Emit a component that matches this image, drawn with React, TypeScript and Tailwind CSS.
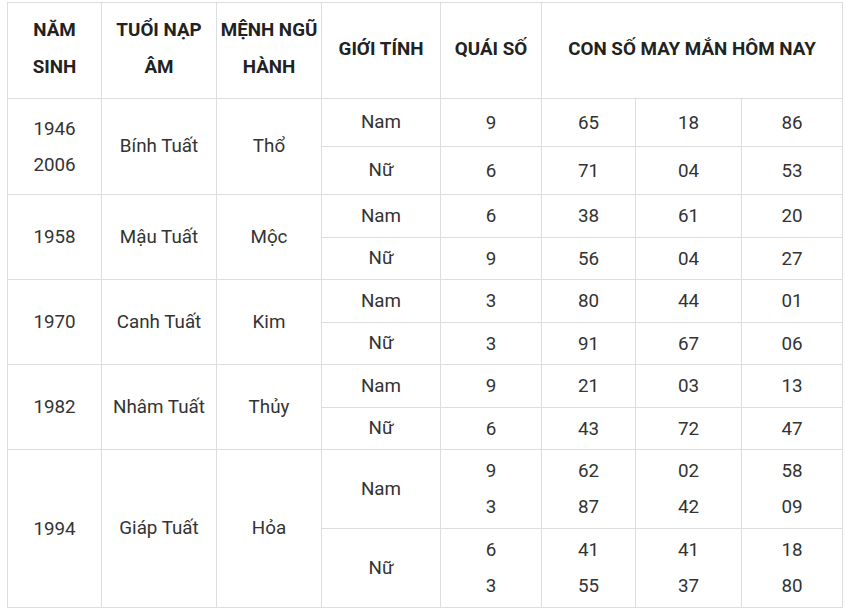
const rows = [
  {
    years: ["1946", "2006"],
    tuoi: "Bính Tuất",
    menh: "Thổ",
    h: ["h-[48px]", "h-[48px]"],
    subs: [
      { g: "Nam", q: ["9"], n: [["65"], ["18"], ["86"]] },
      { g: "Nữ", q: ["6"], n: [["71"], ["04"], ["53"]] },
    ],
  },
  {
    years: ["1958"],
    tuoi: "Mậu Tuất",
    menh: "Mộc",
    h: ["h-[43px]", "h-[42px]"],
    subs: [
      { g: "Nam", q: ["6"], n: [["38"], ["61"], ["20"]] },
      { g: "Nữ", q: ["9"], n: [["56"], ["04"], ["27"]] },
    ],
  },
  {
    years: ["1970"],
    tuoi: "Canh Tuất",
    menh: "Kim",
    h: ["h-[43px]", "h-[42px]"],
    subs: [
      { g: "Nam", q: ["3"], n: [["80"], ["44"], ["01"]] },
      { g: "Nữ", q: ["3"], n: [["91"], ["67"], ["06"]] },
    ],
  },
  {
    years: ["1982"],
    tuoi: "Nhâm Tuất",
    menh: "Thủy",
    h: ["h-[43px]", "h-[42px]"],
    subs: [
      { g: "Nam", q: ["9"], n: [["21"], ["03"], ["13"]] },
      { g: "Nữ", q: ["6"], n: [["43"], ["72"], ["47"]] },
    ],
  },
  {
    years: ["1994"],
    tuoi: "Giáp Tuất",
    menh: "Hỏa",
    h: ["h-[79px]", "h-[79px]"],
    subs: [
      { g: "Nam", q: ["9", "3"], n: [["62", "87"], ["02", "42"], ["58", "09"]] },
      { g: "Nữ", q: ["6", "3"], n: [["41", "55"], ["41", "37"], ["18", "80"]] },
    ],
  },
];

const cell = "border border-[#dddddd] p-0 text-center align-middle";

const Lines = ({ items }: { items: string[] }) => (
  <>
    {items.map((t, i) => (
      <div key={i} className="leading-[36px]">
        {t}
      </div>
    ))}
  </>
);

export default function App() {
  return (
    <div className="min-h-[613px] w-[846px] bg-white pl-[7px] pt-[2px]" style={{ fontFamily: "Roboto, 'Liberation Sans', sans-serif" }}>
      <table className="table-fixed border-collapse text-[18.8px] text-[#333333] w-[836px]">
        <colgroup>
          <col className="w-[94px]" />
          <col className="w-[115px]" />
          <col className="w-[105px]" />
          <col className="w-[119px]" />
          <col className="w-[101px]" />
          <col className="w-[94px]" />
          <col className="w-[106px]" />
          <col className="w-[101px]" />
        </colgroup>
        <thead>
          <tr className="h-[96px] font-bold text-[#222222] leading-[37px]">
            <th className={cell}><div className="-mt-[3px]">NĂM<br />SINH</div></th>
            <th className={cell}><div className="-mt-[3px]">TUỔI NẠP<br />ÂM</div></th>
            <th className={cell + " whitespace-nowrap"}><div className="-mt-[3px]">MỆNH NGŨ<br />HÀNH</div></th>
            <th className={cell + " whitespace-nowrap"}><div className="-mt-[3px]">GIỚI TÍNH</div></th>
            <th className={cell + " whitespace-nowrap"}><div className="-mt-[3px]">QUÁI SỐ</div></th>
            <th className={cell + " whitespace-nowrap"} colSpan={3}><div className="-mt-[3px]">CON SỐ MAY MẮN HÔM NAY</div></th>
          </tr>
        </thead>
        <tbody>
          {rows.map((r) =>
            r.subs.map((s, si) => (
              <tr key={r.tuoi + si} className={r.h[si]}>
                {si === 0 && (
                  <>
                    <td className={cell} rowSpan={2}>
                      <Lines items={r.years} />
                    </td>
                    <td className={cell} rowSpan={2}>{r.tuoi}</td>
                    <td className={cell} rowSpan={2}>{r.menh}</td>
                  </>
                )}
                <td className={cell}>{s.g}</td>
                <td className={cell}>
                  <Lines items={s.q} />
                </td>
                {s.n.map((col, ci) => (
                  <td key={ci} className={cell}>
                    <Lines items={col} />
                  </td>
                ))}
              </tr>
            ))
          )}
        </tbody>
      </table>
    </div>
  );
}
